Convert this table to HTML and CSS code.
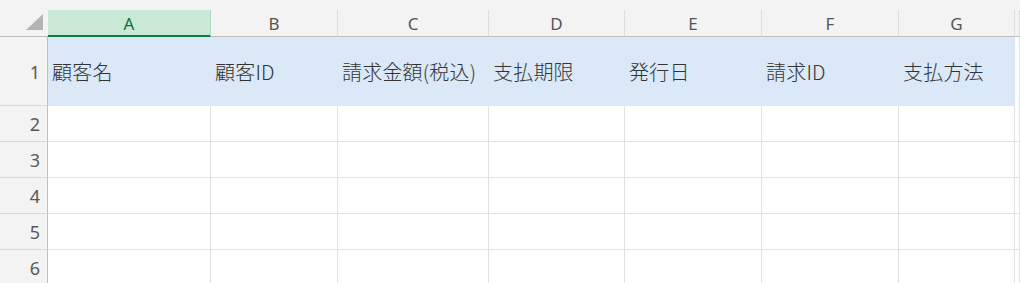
FILE: index.html
```html
<!DOCTYPE html>
<html lang="ja">
<head>
	<meta charset="utf-8">
	<title>請求一覧</title>
	<meta name="viewport" content="width=device-width, initial-scale=1">
	<link rel="stylesheet" href="styles.css">
</head>
<body>
	<div class="sheet">
		<!-- column headings -->
		<div class="corner">
			<svg width="17" height="16" viewBox="0 0 17 16"><polygon points="17,0 17,16 0,16" fill="#b4b4b4" /></svg>
		</div>
		<div class="col_head active">A</div>
		<div class="col_head">B</div>
		<div class="col_head">C</div>
		<div class="col_head">D</div>
		<div class="col_head">E</div>
		<div class="col_head">F</div>
		<div class="col_head">G</div>
		<div class="col_head"></div>

		<!-- row 1: titles -->
		<div class="row_head first">1</div>
		<div class="cell title">顧客名</div>
		<div class="cell title">顧客ID</div>
		<div class="cell title">請求金額(税込)</div>
		<div class="cell title">支払期限</div>
		<div class="cell title">発行日</div>
		<div class="cell title">請求ID</div>
		<div class="cell title">支払方法</div>
		<div class="cell first"></div>

		<div class="row_head">2</div>
		<div class="cell"></div><div class="cell"></div><div class="cell"></div><div class="cell"></div>
		<div class="cell"></div><div class="cell"></div><div class="cell"></div><div class="cell"></div>

		<div class="row_head">3</div>
		<div class="cell"></div><div class="cell"></div><div class="cell"></div><div class="cell"></div>
		<div class="cell"></div><div class="cell"></div><div class="cell"></div><div class="cell"></div>

		<div class="row_head">4</div>
		<div class="cell"></div><div class="cell"></div><div class="cell"></div><div class="cell"></div>
		<div class="cell"></div><div class="cell"></div><div class="cell"></div><div class="cell"></div>

		<div class="row_head">5</div>
		<div class="cell"></div><div class="cell"></div><div class="cell"></div><div class="cell"></div>
		<div class="cell"></div><div class="cell"></div><div class="cell"></div><div class="cell"></div>

		<div class="row_head">6</div>
		<div class="cell"></div><div class="cell"></div><div class="cell"></div><div class="cell"></div>
		<div class="cell"></div><div class="cell"></div><div class="cell"></div><div class="cell"></div>
	</div>
</body>
</html>
```

FILE: styles.css
```css
html, body {
	margin: 0;
	padding: 0;
	background: #fff;
	overflow: hidden;
}
.sheet {
	display: grid;
	grid-template-columns: 48px 163px 127px 151px 136px 137px 137px 116px 1fr;
	grid-template-rows: 27px 69px repeat(5, 36px);
	padding-top: 10px;
	background: #f3f3f3;
	font-family: "Noto Sans", "Noto Sans CJK JP", sans-serif;
	width: 1020px;
	height: 283px;
	overflow: hidden;
}
.corner {
	border-bottom: 1px solid #bdbdbd;
	display: flex;
	justify-content: flex-end;
	align-items: flex-start;
	padding: 4px 5px 0 0;
	box-sizing: border-box;
}
.col_head {
	box-sizing: border-box;
	border-right: 1px solid #dcdcdc;
	border-bottom: 1px solid #bdbdbd;
	display: flex;
	align-items: center;
	justify-content: center;
	font-size: 17px;
	color: #555;
	padding-top: 1px;
}
.col_head.active {
	background: #c9e8d5;
	color: #0e6f3a;
	border-right-color: #a9d9bc;
	border-bottom-color: #127a40;
	box-shadow: inset 0 -1px 0 #127a40;
}
.row_head {
	box-sizing: border-box;
	border-right: 1px solid #bdbdbd;
	border-bottom: 1px solid #d6d6d6;
	display: flex;
	align-items: center;
	justify-content: flex-end;
	padding: 1px 7px 0 0;
	font-size: 18px;
	color: #595959;
}
.cell {
	box-sizing: border-box;
	background: #fff;
	border-right: 1px solid #e1e1e1;
	border-bottom: 1px solid #e1e1e1;
}
.cell.first {
	border-bottom: none;
}
.cell.title {
	background: #dae8f7;
	border: none;
	display: flex;
	align-items: center;
	padding: 0 0 0 4px;
	font-family: "Noto Sans CJK JP", sans-serif;
	font-weight: 300;
	font-size: 20px;
	letter-spacing: 0.2px;
	color: #333;
	white-space: nowrap;
}
```
